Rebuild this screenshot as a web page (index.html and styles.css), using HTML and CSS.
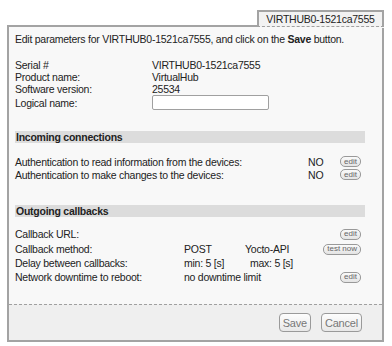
FILE: index.html
```html
<!DOCTYPE html>
<html lang="en">
  <head>
    <meta charset="UTF-8" />
    <title>VIRTHUB0-1521ca7555</title>
    <link rel="stylesheet" href="styles.css">
  </head>
  <body>
    <div class="wrap">
      <div class="tabs">
        <div class="tab">VIRTHUB0-1521ca7555</div>
      </div>
      <div class="panel">
        <div class="content">
          <p class="intro">Edit parameters for VIRTHUB0-1521ca7555, and click on the <b>Save</b> button.</p>

          <div class="info">
            <div class="info-row"><span class="key">Serial #</span><span>VIRTHUB0-1521ca7555</span></div>
            <div class="info-row"><span class="key">Product name:</span><span>VirtualHub</span></div>
            <div class="info-row"><span class="key">Software version:</span><span>25534</span></div>
            <div class="info-row name-row"><span class="key">Logical name:</span><input type="text" class="name-input" /></div>
          </div>

          <div class="section-title">Incoming connections</div>
          <div class="auth-row">
            <span class="auth-label">Authentication to read information from the devices:</span>
            <span class="auth-val">NO</span>
            <button class="mini">edit</button>
          </div>
          <div class="auth-row">
            <span class="auth-label">Authentication to make changes to the devices:</span>
            <span class="auth-val">NO</span>
            <button class="mini">edit</button>
          </div>

          <div class="section-title out">Outgoing callbacks</div>
          <div class="cb-row">
            <span class="cb-label">Callback URL:</span>
            <span class="cb-v1"></span>
            <span class="cb-v2"></span>
            <button class="mini">edit</button>
          </div>
          <div class="cb-row tall">
            <span class="cb-label">Callback method:</span>
            <span class="cb-v1">POST</span>
            <span class="cb-v2">Yocto-API</span>
            <button class="mini">test now</button>
          </div>
          <div class="cb-row short">
            <span class="cb-label">Delay between callbacks:</span>
            <span class="cb-v1">min: 5 [s]</span>
            <span class="cb-v2 shift">max: 5 [s]</span>
          </div>
          <div class="cb-row tall">
            <span class="cb-label">Network downtime to reboot:</span>
            <span class="cb-wide">no downtime limit</span>
            <button class="mini">edit</button>
          </div>
        </div>
        <div class="footer">
          <button class="btn">Save</button>
          <button class="btn">Cancel</button>
        </div>
      </div>
    </div>
  </body>
</html>
```

FILE: styles.css
```css
body {
  margin: 0;
  background: #fff;
  font-family: "Liberation Sans", Arial, sans-serif;
  font-size: 10.5px;
  letter-spacing: -0.25px;
  color: #222;
}
.wrap {
  padding: 10px 8px 0 7px;
}
.tabs {
  display: flex;
  justify-content: flex-end;
}
.tab {
  position: relative;
  z-index: 1;
  width: 123px;
  height: 14px;
  line-height: 14px;
  text-align: center;
  background: #f2f2f2;
  border: 2px solid #a3a3a3;
  border-bottom: 1px dashed #a0a0a0;
  margin-bottom: -2px;
  box-shadow: 0 1px 0 #f8f8f8;
}
.panel {
  border: 2px solid #a3a3a3;
  background: #f8f8f8;
  height: 313px;
  display: flex;
  flex-direction: column;
}
.content {
  flex: 1;
  padding: 6px 17px 0 6px;
}
.intro {
  margin: 0;
  line-height: 13px;
}
.info {
  margin-top: 13px;
}
.info-row {
  display: flex;
  align-items: center;
  height: 12px;
}
.key {
  width: 137px;
  flex-shrink: 0;
}
.name-row {
  height: 15px;
}
.name-input {
  width: 117px;
  height: 15px;
  box-sizing: border-box;
  border: 1px solid #a0a0a0;
  border-radius: 2px;
  background: #fff;
  padding: 0 2px;
  margin: 0;
}
.section-title {
  margin-top: 21px;
  height: 12px;
  line-height: 12px;
  background: #dcdcdc;
  font-weight: bold;
  padding-left: 1px;
}
.section-title.out {
  margin-top: 24px;
}
.auth-row {
  display: flex;
  align-items: center;
  height: 13px;
  padding-right: 4px;
}
.section-title + .auth-row {
  margin-top: 12px;
}
.auth-label {
  flex: 1;
}
.auth-val {
  width: 32px;
}
.cb-row {
  display: flex;
  align-items: center;
  height: 14px;
  padding-right: 4px;
}
.section-title + .cb-row {
  margin-top: 10px;
}
.cb-row.tall {
  height: 16px;
}
.cb-row.short {
  height: 12px;
}
.cb-label {
  width: 169px;
  flex-shrink: 0;
}
.cb-v1 {
  width: 61px;
  flex-shrink: 0;
}
.cb-v2 {
  flex: 1;
}
.cb-v2.shift {
  padding-left: 5px;
}
.cb-wide {
  flex: 1;
}
.mini {
  margin: 0;
  height: 11px;
  padding: 0 3px;
  font-family: "Liberation Sans", Arial, sans-serif;
  font-size: 8px;
  line-height: 8px;
  letter-spacing: 0;
  color: #666;
  background: linear-gradient(#fafafa, #e4e4e4);
  border: 1px solid #999;
  border-radius: 5px;
}
.footer {
  height: 35px;
  border-top: 1px dashed #a0a0a0;
  background: #efefef;
  display: flex;
  justify-content: flex-end;
  align-items: center;
  gap: 10px;
  padding-right: 20px;
}
.btn {
  margin: 0;
  height: 19px;
  padding: 0 3px;
  font-family: "Liberation Sans", Arial, sans-serif;
  font-size: 11px;
  letter-spacing: -0.2px;
  color: #777;
  background: linear-gradient(#fdfdfd, #e8e8e8);
  border: 1px solid #9a9a9a;
  border-radius: 4px;
}
```
